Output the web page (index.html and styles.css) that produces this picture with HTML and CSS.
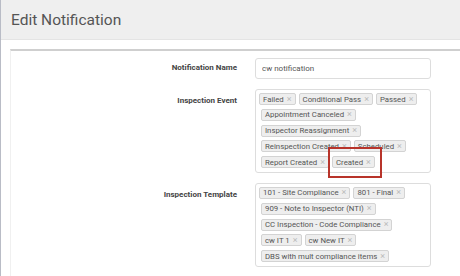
FILE: index.html
```html
<!DOCTYPE html>
<html lang="en">
<head>
    <meta charset="UTF-8">
    <title>Edit Notification</title>
    <link rel="stylesheet" href="styles.css">
</head>
<body>

<div class="header">
    <h1>Edit Notification</h1>
</div>

<div class="panel">
    <div class="row">
        <label class="label">Notification Name</label>
        <div class="field">
            <input type="text" class="input" value="cw notification">
        </div>
    </div>

    <div class="row">
        <label class="label label-top">Inspection Event</label>
        <div class="field">
            <div class="tags">
                <span class="tag">Failed <i>&times;</i></span>
                <span class="tag">Conditional Pass <i>&times;</i></span>
                <span class="tag">Passed <i>&times;</i></span>
                <span class="tag">Appointment Canceled <i>&times;</i></span>
                <span class="tag">Inspector Reassignment <i>&times;</i></span>
                <span class="tag">Reinspection Created <i>&times;</i></span>
                <span class="tag">Scheduled <i>&times;</i></span>
                <span class="tag">Report Created <i>&times;</i></span>
                <span class="tag highlight">Created <i>&times;</i></span>
            </div>
        </div>
    </div>

    <div class="row">
        <label class="label label-top">Inspection Template</label>
        <div class="field">
            <div class="tags">
                <span class="tag">101 - Site Compliance <i>&times;</i></span>
                <span class="tag">801 - Final <i>&times;</i></span>
                <span class="tag">909 - Note to Inspector (NTI) <i>&times;</i></span>
                <span class="tag">CC Inspection - Code Compliance <i>&times;</i></span>
                <span class="tag">cw IT 1 <i>&times;</i></span>
                <span class="tag">cw New IT <i>&times;</i></span>
                <span class="tag">DBS with mult compliance items <i>&times;</i></span>
            </div>
        </div>
    </div>

    <div class="row">
        <label class="label"></label>
        <div class="field">
            <div class="tags tags-empty"></div>
        </div>
    </div>
</div>

</body>
</html>
```

FILE: styles.css
```css
body {
    font-family: Roboto, "Liberation Sans", sans-serif;
    background-color: #fff;
    margin: 0;
    padding: 0;
    border-left: 1px solid #b9bcc6;
    height: 276px;
    overflow: hidden;
    box-sizing: border-box;
}

.header {
    height: 40px;
    background-color: #efefef;
    border-bottom: 1px solid #e4e4e4;
    box-sizing: border-box;
    padding-left: 10px;
    display: flex;
    align-items: center;
}

h1 {
    margin: 0;
    font-size: 15.5px;
    font-weight: 400;
    color: #555;
}

.panel {
    margin: 9px 0 0 9px;
    border-top: 2px solid #cfcfcf;
    border-left: 1px solid #f0f0f0;
    padding-top: 5px;
}

.row {
    display: flex;
    margin-bottom: 10px;
}

.label {
    width: 226px;
    flex: none;
    text-align: right;
    font-size: 8px;
    font-weight: 700;
    color: #444;
    display: flex;
    align-items: center;
    justify-content: flex-end;
}

.label-top {
    align-items: flex-start;
    padding-top: 7px;
}

.field {
    margin-left: 18px;
    width: 176px;
}

.input {
    width: 100%;
    height: 21px;
    box-sizing: border-box;
    border: 1px solid #ddd;
    border-radius: 3px;
    padding: 0 6px;
    font-family: inherit;
    font-size: 8px;
    color: #555;
}

.tags {
    border: 1px solid #ddd;
    border-radius: 3px;
    padding: 3px 1px 0 2px;
    display: flex;
    flex-wrap: wrap;
    align-items: flex-start;
    align-content: flex-start;
}

.tags-empty {
    height: 20px;
}

.tag {
    display: inline-flex;
    align-items: center;
    height: 12px;
    box-sizing: border-box;
    padding: 0 3px;
    margin: 0 0 3.8px 1px;
    background-color: #eee;
    border: 1px solid #d3d3d3;
    border-radius: 2px;
    font-size: 7.8px;
    color: #555;
    white-space: nowrap;
}

.tag + .tag {
    margin-left: 3px;
}

.tag i {
    font-style: normal;
    color: #bbb;
    margin-left: 3px;
    font-size: 9px;
    line-height: 1;
}

.tag.highlight {
    position: relative;
}

.highlight::after {
    content: "";
    position: absolute;
    left: -5px;
    right: -8px;
    top: -10px;
    bottom: -11px;
    border: 2px solid #b8342a;
}
```
